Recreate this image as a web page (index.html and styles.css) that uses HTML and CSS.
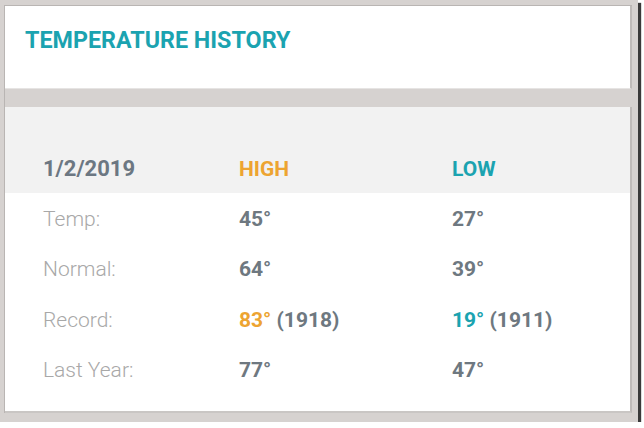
FILE: index.html
```html
<!DOCTYPE html>
<html>
<head>
<meta charset="utf-8">
<link rel="stylesheet" href="styles.css">
</head>
<body>
<div class="frame">
  <div class="inner">
    <section class="panel head-panel">
      <h1 class="title">TEMPERATURE HISTORY</h1>
    </section>
    <section class="panel table-panel">
      <div class="row row-head">
        <div class="date">1/2/2019</div>
        <div class="high">HIGH</div>
        <div class="low">LOW</div>
      </div>
      <div class="row">
        <div class="label">Temp:</div>
        <div class="val">45°</div>
        <div class="val">27°</div>
      </div>
      <div class="row">
        <div class="label">Normal:</div>
        <div class="val">64°</div>
        <div class="val">39°</div>
      </div>
      <div class="row">
        <div class="label">Record:</div>
        <div class="val"><span class="high">83°</span> (1918)</div>
        <div class="val"><span class="low">19°</span> (1911)</div>
      </div>
      <div class="row">
        <div class="label">Last Year:</div>
        <div class="val">77°</div>
        <div class="val">47°</div>
      </div>
    </section>
  </div>
</div>
</body>
</html>
```

FILE: styles.css
```css
* { box-sizing: border-box; }
html, body { margin: 0; padding: 0; background: #ffffff; }
body { font-family: Roboto, "Liberation Sans", sans-serif; }

.frame {
  width: 638px;
  padding: 5px 6px 9px 4px;
  background: #d6d2d0;
  box-shadow: 3px 3px 1px #3a3a3a;
}
.inner {
  border-left: 1px solid #b9b5b3;
  border-top: 1px solid #b9b5b3;
  display: flex;
  flex-direction: column;
  gap: 18px;
}
.panel {
  background: #ffffff;
  border-right: 2px solid #bfbbb9;
  flex: none;
}
.head-panel {
  height: 83px;
  padding: 20px 0 0 20px;
  border-bottom: 1px solid #e6e4e3;
}
.title {
  margin: 0;
  font-size: 23.3px;
  line-height: 28px;
  font-weight: 700;
  color: #1ba3b0;
}
.table-panel {
  height: 306px;
  border-bottom: 2px solid #c9c6c4;
}
.row {
  display: grid;
  grid-template-columns: 196px 213px 1fr;
  padding: 14px 0 12px 38px;
  font-size: 21px;
  line-height: 24.3px;
}
.row-head {
  background: #f2f2f2;
  height: 86px;
  padding-top: 50px;
  padding-bottom: 12px;
  font-weight: 700;
  line-height: 24px;
}
.date { color: #6c7782; font-size: 22px; }
.high { color: #eda431; }
.low { color: #1ba3b0; }
.label { color: #a8a8a8; font-weight: 300; }
.val { color: #6e7880; font-weight: 700; }
```
